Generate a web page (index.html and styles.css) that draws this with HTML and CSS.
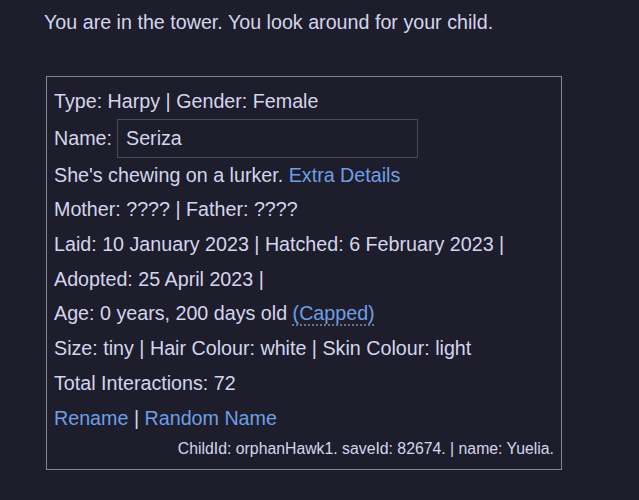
FILE: index.html
```html
<!DOCTYPE html>
<html>
<head>
<meta charset="utf-8">
<link rel="stylesheet" href="styles.css">
</head>
<body>
<div class="page">
  <p class="intro">You are in the tower. You look around for your child.</p>
  <div class="card">
    <div class="row">Type: Harpy | Gender: Female</div>
    <div class="row name-row">Name:<input class="name-input" type="text" value="Seriza"></div>
    <div class="row">She's chewing on a lurker. <a class="link" href="#">Extra Details</a></div>
    <div class="row">Mother: ???? | Father: ????</div>
    <div class="row">Laid: 10 January 2023 | Hatched: 6 February 2023 |</div>
    <div class="row">Adopted: 25 April 2023 |</div>
    <div class="row">Age: 0 years, 200 days old <span class="capped">(Capped)</span></div>
    <div class="row">Size: tiny | Hair Colour: white | Skin Colour: light</div>
    <div class="row">Total Interactions: 72</div>
    <div class="row"><a class="link" href="#">Rename</a> <span class="sep">|</span> <a class="link" href="#">Random Name</a></div>
    <div class="meta">ChildId: orphanHawk1. saveId: 82674. | name: Yuelia.</div>
  </div>
</div>
</body>
</html>
```
FILE: styles.css
```css
html, body {
  margin: 0;
  padding: 0;
  background: #1e1d2b;
  height: 100%;
}
body {
  font-family: "Liberation Sans", Arial, sans-serif;
  color: #d3d6ee;
  font-size: 19.7px;
}
.page {
  padding: 9px 0 0 44px;
}
.intro {
  margin: 0;
  line-height: 26px;
}
.card {
  margin-top: 41px;
  margin-left: 2px;
  width: 500px;
  border: 1px solid #85849a;
  padding: 7px 7px 6px 7px;
}
.row {
  height: 34.7px;
  line-height: 34.7px;
  white-space: nowrap;
}
.name-row {
  height: 39px;
  display: flex;
  align-items: center;
}
.name-input {
  margin-left: 5px;
  height: 39px;
  box-sizing: border-box;
  width: 301px;
  border: 1px solid #4a4a5c;
  background: #1e1d2b;
  color: #d3d6ee;
  font-family: "Liberation Sans", Arial, sans-serif;
  font-size: 19.7px;
  padding: 0 8px;
  outline: none;
}
.link {
  color: #6f9fe6;
  text-decoration: none;
}
.capped {
  color: #6f9fe6;
  text-decoration: underline dotted #6f7590;
  text-underline-offset: 4px;
}
.sep {
  color: #d3d6ee;
}
.meta {
  text-align: right;
  font-size: 15.8px;
  height: 28px;
  line-height: 28px;
  padding-right: 0;
}
```
